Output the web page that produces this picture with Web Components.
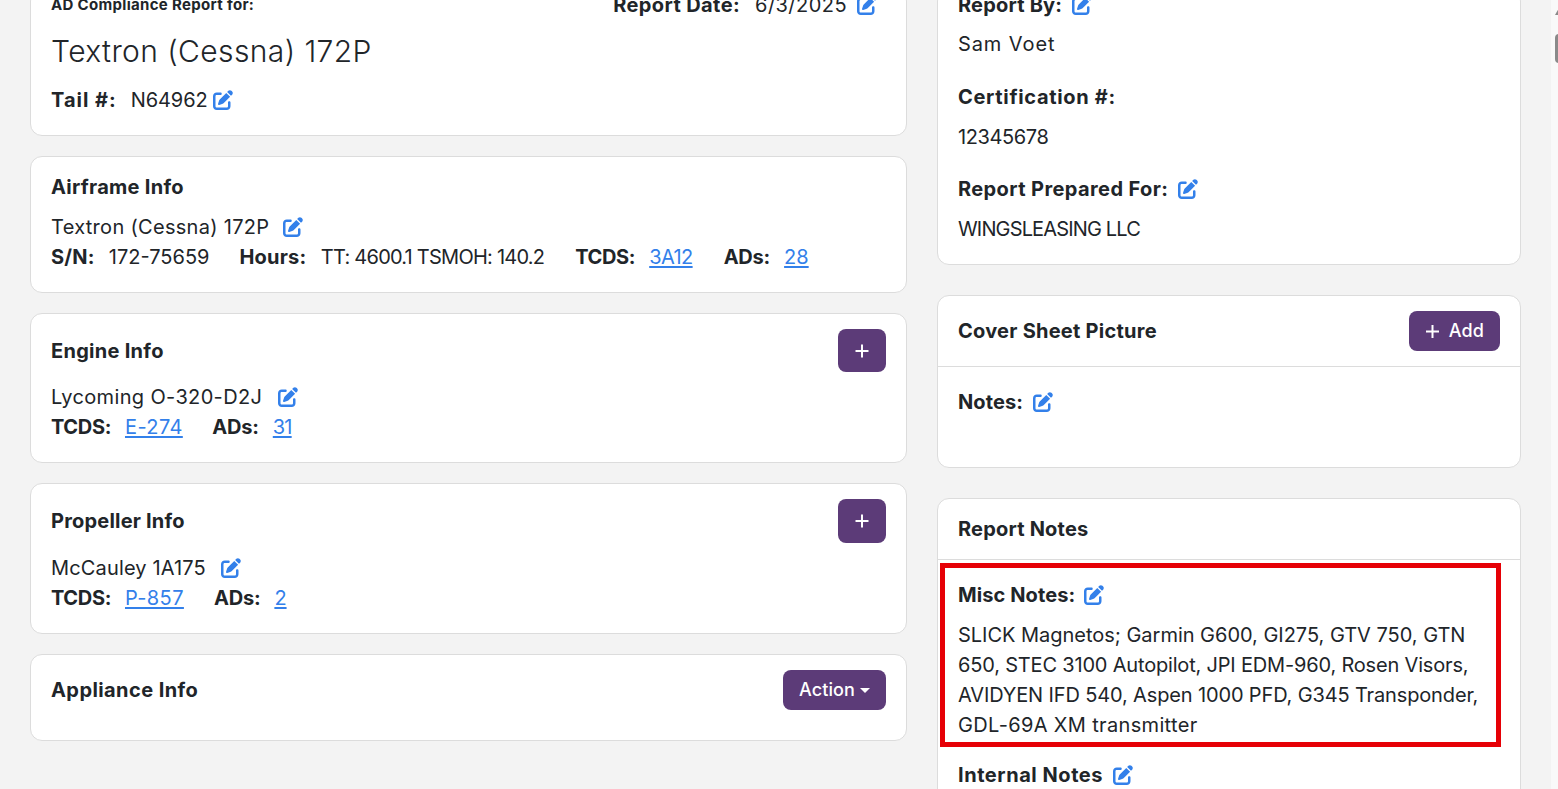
<!DOCTYPE html>
<html>
<head>
<meta charset="utf-8">
<title>AD Compliance Report</title>
<style>
  html, body { margin: 0; height: 100%; overflow: hidden; background: #f3f3f3; }
  body { font-family: Inter, "Liberation Sans", sans-serif; font-size: 20px; line-height: 30px; color: #212529; }
  .line { display: block; white-space: nowrap; }
</style>
</head>
<body>
<report-page>
  <div slot="left">
    <report-card>
      <div style="display:flex;justify-content:space-between;height:30px">
        <b style="font-size:15px;font-weight:700;letter-spacing:.32px">AD Compliance Report for:</b>
        <span style="margin-right:9px"><field-row label="Report Date:" gap="15" ls=".4"><span style="letter-spacing:.45px">6/3/2025</span><edit-icon gap="10"></edit-icon></field-row></span>
      </div>
      <div style="font-size:30px;font-weight:300;line-height:45px;margin:8.5px 0 11.5px;letter-spacing:.4px">Textron (Cessna) 172P</div>
      <field-row label="Tail #:" gap="14" ls="1"><span style="letter-spacing:-.1px">N64962</span><edit-icon gap="5"></edit-icon></field-row>
    </report-card>
    <report-card heading="Airframe Info" ls=".28">
      <div style="margin-top:10px"><span style="letter-spacing:.3px">Textron (Cessna) 172P</span><edit-icon gap="14"></edit-icon></div>
      <field-row label="S/N:" gap="14" ls=".25">172-75659<inline-label label="Hours:" ls=".2" after="14.5" before="30"><span style="letter-spacing:-.76px">TT: 4600.1 TSMOH: 140.2</span></inline-label><inline-label label="TCDS:" ls="-.35" before="31"><a-link ls="-.6">3A12</a-link></inline-label><inline-label label="ADs:" ls="-.2" before="31"><a-link>28</a-link></inline-label></field-row>
    </report-card>
    <report-card heading="Engine Info" ls=".28">
      <square-button slot="action" h="43"></square-button>
      <div style="margin-top:10px"><span style="letter-spacing:.35px">Lycoming O-320-D2J</span><edit-icon gap="16"></edit-icon></div>
      <field-row label="TCDS:" gap="14" ls="-.35"><a-link ls=".4">E-274</a-link><inline-label label="ADs:" ls="-.2" before="29.5"><a-link ls="-.8">31</a-link></inline-label></field-row>
    </report-card>
    <report-card heading="Propeller Info">
      <square-button slot="action" h="44"></square-button>
      <div style="margin-top:10px"><span style="letter-spacing:.15px">McCauley 1A175</span><edit-icon gap="15"></edit-icon></div>
      <field-row label="TCDS:" gap="14" ls="-.35"><a-link ls=".4">P-857</a-link><inline-label label="ADs:" ls="-.2" before="30"><a-link>2</a-link></inline-label></field-row>
    </report-card>
    <report-card heading="Appliance Info" ls=".42">
      <pill-button slot="action" caret>Action</pill-button>
      <div style="height:10px"></div>
    </report-card>
  </div>
  <div slot="right">
    <report-card>
      <field-row label="Report By:" gap="10" ls=".2"><edit-icon></edit-icon></field-row>
      <div style="margin-top:9px;letter-spacing:.9px">Sam Voet</div>
      <div style="margin-top:23px"><field-row label="Certification #:" ls=".68"></field-row></div>
      <div style="margin-top:10px;letter-spacing:-.4px">12345678</div>
      <div style="margin-top:22px"><field-row label="Report Prepared For:" gap="10" ls=".4"><edit-icon></edit-icon></field-row></div>
      <div style="margin-top:10px;letter-spacing:-.85px">WINGSLEASING LLC</div>
    </report-card>
    <report-card heading="Cover Sheet Picture" ruled ls=".25">
      <pill-button slot="action" plus>Add</pill-button>
      <div style="padding-bottom:30px"><field-row label="Notes:" gap="10" ls=".1"><edit-icon></edit-icon></field-row></div>
    </report-card>
    <report-card heading="Report Notes" ruled flush>
      <marked-box>
        <field-row label="Misc Notes:" gap="9" ls=".1"><edit-icon></edit-icon></field-row>
        <div style="margin-top:10px">
          <span class="line" style="letter-spacing:-.02px">SLICK Magnetos; Garmin G600, GI275, GTV 750, GTN</span>
          <span class="line" style="letter-spacing:-.18px">650, STEC 3100 Autopilot, JPI EDM-960, Rosen Visors,</span>
          <span class="line" style="letter-spacing:-.14px">AVIDYEN IFD 540, Aspen 1000 PFD, G345 Transponder,</span>
          <span class="line" style="letter-spacing:.34px">GDL-69A XM transmitter</span>
        </div>
      </marked-box>
      <div style="padding:13px 20px 20px"><field-row label="Internal Notes" gap="10" ls=".55"><edit-icon></edit-icon></field-row></div>
    </report-card>
  </div>
</report-page>

<script>
class ReportPage extends HTMLElement {
  constructor() {
    super();
    this.attachShadow({ mode: 'open' });
    this.shadowRoot.innerHTML = `
      <style>
        :host { display: block; height: 789px; overflow: hidden; position: relative; }
        .cols { display: grid; grid-template-columns: 877px 584px; column-gap: 30px; padding-left: 30px; margin-top: -11px; align-items: start; }
        ::slotted([slot=left]) { display: flex; flex-direction: column; gap: 20px; }
        ::slotted([slot=right]) { display: flex; flex-direction: column; gap: 30px; }
        .track { position: absolute; top: 0; right: 0; bottom: 0; width: 7px; background: #f9f9f9; overflow: hidden; }
        .arrow { position: absolute; left: 4px; top: 8px; width: 0; height: 0; border-left: 4px solid transparent; border-right: 4px solid transparent; border-bottom: 7px solid #8a8a8a; }
        .thumb { position: absolute; left: 4px; top: 34px; width: 8px; height: 29px; border-radius: 4px; background: #8a8a8a; }
      </style>
      <div class="cols"><slot name="left"></slot><slot name="right"></slot></div>
      <div class="track"><div class="arrow"></div><div class="thumb"></div></div>`;
  }
}

class ReportCard extends HTMLElement {
  constructor() {
    super();
    this.attachShadow({ mode: 'open' });
  }
  connectedCallback() {
    const heading = this.getAttribute('heading');
    const ruled = this.hasAttribute('ruled');
    const flush = this.hasAttribute('flush');
    this.shadowRoot.innerHTML = `
      <style>
        :host { display: block; background: #fff; border: 1px solid #dcdcdc; border-radius: 12px; overflow: hidden; }
        header { display: flex; justify-content: space-between; align-items: center; padding: 15px 20px ${ruled ? '15px' : '0'}; ${ruled ? 'border-bottom: 1px solid #dcdcdc;' : ''} }
        h2 { margin: 0; font-size: 20px; line-height: 30px; font-weight: 700; letter-spacing: ${this.getAttribute('ls') || '.2'}px; }
        .body { padding: ${flush ? '0' : (heading && !ruled ? '0 20px 20px' : '20px 20px 20px')}; }
        .plain { padding-top: 0; }
      </style>
      ${heading ? `<header><h2>${heading}</h2><slot name="action"></slot></header>` : ''}
      <div class="body ${heading ? '' : 'plain'}"><slot></slot></div>`;
  }
}

class FieldRow extends HTMLElement {
  constructor() {
    super();
    this.attachShadow({ mode: 'open' });
  }
  connectedCallback() {
    this.shadowRoot.innerHTML = `<style>
        :host { display: inline-block; white-space: nowrap; }
        b { font-weight: 700; letter-spacing: ${this.getAttribute('ls') || 0}px; margin-right: ${this.getAttribute('gap') || 0}px; }
      </style><b>${this.getAttribute('label')}</b><slot></slot>`;
  }
}

class InlineLabel extends HTMLElement {
  constructor() {
    super();
    this.attachShadow({ mode: 'open' });
  }
  connectedCallback() {
    this.shadowRoot.innerHTML = `<style>
        :host { display: inline; margin-left: ${this.getAttribute('before') || 30}px; }
        b { font-weight: 700; letter-spacing: ${this.getAttribute('ls') || 0}px; margin-right: ${this.getAttribute('after') || 14}px; }
      </style><b>${this.getAttribute('label')}</b><slot></slot>`;
  }
}

class ALink extends HTMLElement {
  constructor() {
    super();
    this.attachShadow({ mode: 'open' });
  }
  connectedCallback() {
    this.shadowRoot.innerHTML = `<style>:host { display: inline; color: #3380ea; text-decoration: underline; text-underline-offset: 2px; text-decoration-thickness: 1.5px; letter-spacing: ${this.getAttribute('ls') || 0}px; }</style><slot></slot>`;
  }
}

class EditIcon extends HTMLElement {
  constructor() {
    super();
    this.attachShadow({ mode: 'open' });
  }
  connectedCallback() {
    this.shadowRoot.innerHTML = `
      <style>
        :host { display: inline-block; width: 20px; height: 20px; margin-left: ${this.getAttribute('gap') || 0}px; vertical-align: -3px; color: #3380ea; }
        svg { display: block; width: 20px; height: 20px; fill: currentColor; }
      </style>
      <svg viewBox="0 0 512 512"><path d="M471.6 21.7c-21.9-21.9-57.3-21.9-79.2 0L362.3 51.7l97.9 97.9 30.1-30.1c21.9-21.9 21.9-57.3 0-79.2L471.6 21.7zm-299.2 220c-6.1 6.1-10.8 13.6-13.5 21.9l-29.6 88.8c-2.9 8.6-.6 18.1 5.8 24.6s15.9 8.7 24.6 5.8l88.8-29.6c8.2-2.7 15.7-7.4 21.9-13.5L437.7 172.3 339.7 74.3 172.4 241.7zM96 64C43 64 0 107 0 160V416c0 53 43 96 96 96H352c53 0 96-43 96-96V320c0-17.7-14.3-32-32-32s-32 14.3-32 32v96c0 17.7-14.3 32-32 32H96c-17.7 0-32-14.3-32-32V160c0-17.7 14.3-32 32-32h96c17.7 0 32-14.3 32-32s-14.3-32-32-32H96z"/></svg>`;
  }
}

class SquareButton extends HTMLElement {
  constructor() {
    super();
    this.attachShadow({ mode: 'open' });
  }
  connectedCallback() {
    this.shadowRoot.innerHTML = `
      <style>
        :host { display: flex; align-items: center; justify-content: center; width: 48px; height: ${this.getAttribute('h')}px; border-radius: 8px; background: #5c3b78; color: #fff; }
        svg { width: 16px; height: 16px; stroke: #fff; stroke-width: 2; }
      </style>
      <svg viewBox="0 0 16 16"><path d="M8 1.5v13M1.5 8h13"/></svg>`;
  }
}

class PillButton extends HTMLElement {
  constructor() {
    super();
    this.attachShadow({ mode: 'open' });
  }
  connectedCallback() {
    const plus = this.hasAttribute('plus');
    const caret = this.hasAttribute('caret');
    this.shadowRoot.innerHTML = `
      <style>
        :host { display: flex; align-items: center; justify-content: center; height: 40px; padding: 0 16px; border-radius: 8px; background: #5c3b78; color: #fff; font-size: 18px; font-weight: 500; line-height: 24px; letter-spacing: .1px; }
        svg { width: 15px; height: 15px; stroke: #fff; stroke-width: 2; margin-right: 9px; }
        i { width: 0; height: 0; margin-left: 5px; border-left: 5px solid transparent; border-right: 5px solid transparent; border-top: 5px solid #fff; }
      </style>
      ${plus ? '<svg viewBox="0 0 15 15"><path d="M7.5 1v13M1 7.5h13"/></svg>' : ''}<slot></slot>${caret ? '<i></i>' : ''}`;
  }
}

class MarkedBox extends HTMLElement {
  constructor() {
    super();
    this.attachShadow({ mode: 'open' });
    this.shadowRoot.innerHTML = `
      <style>
        :host { display: block; margin: 3px 19px 0 2px; padding: 12px 12px 2px 13px; border: 5px solid #e60006; }
      </style>
      <slot></slot>`;
  }
}

customElements.define('report-page', ReportPage);
customElements.define('report-card', ReportCard);
customElements.define('field-row', FieldRow);
customElements.define('inline-label', InlineLabel);
customElements.define('a-link', ALink);
customElements.define('edit-icon', EditIcon);
customElements.define('square-button', SquareButton);
customElements.define('pill-button', PillButton);
customElements.define('marked-box', MarkedBox);
</script>
</body>
</html>
